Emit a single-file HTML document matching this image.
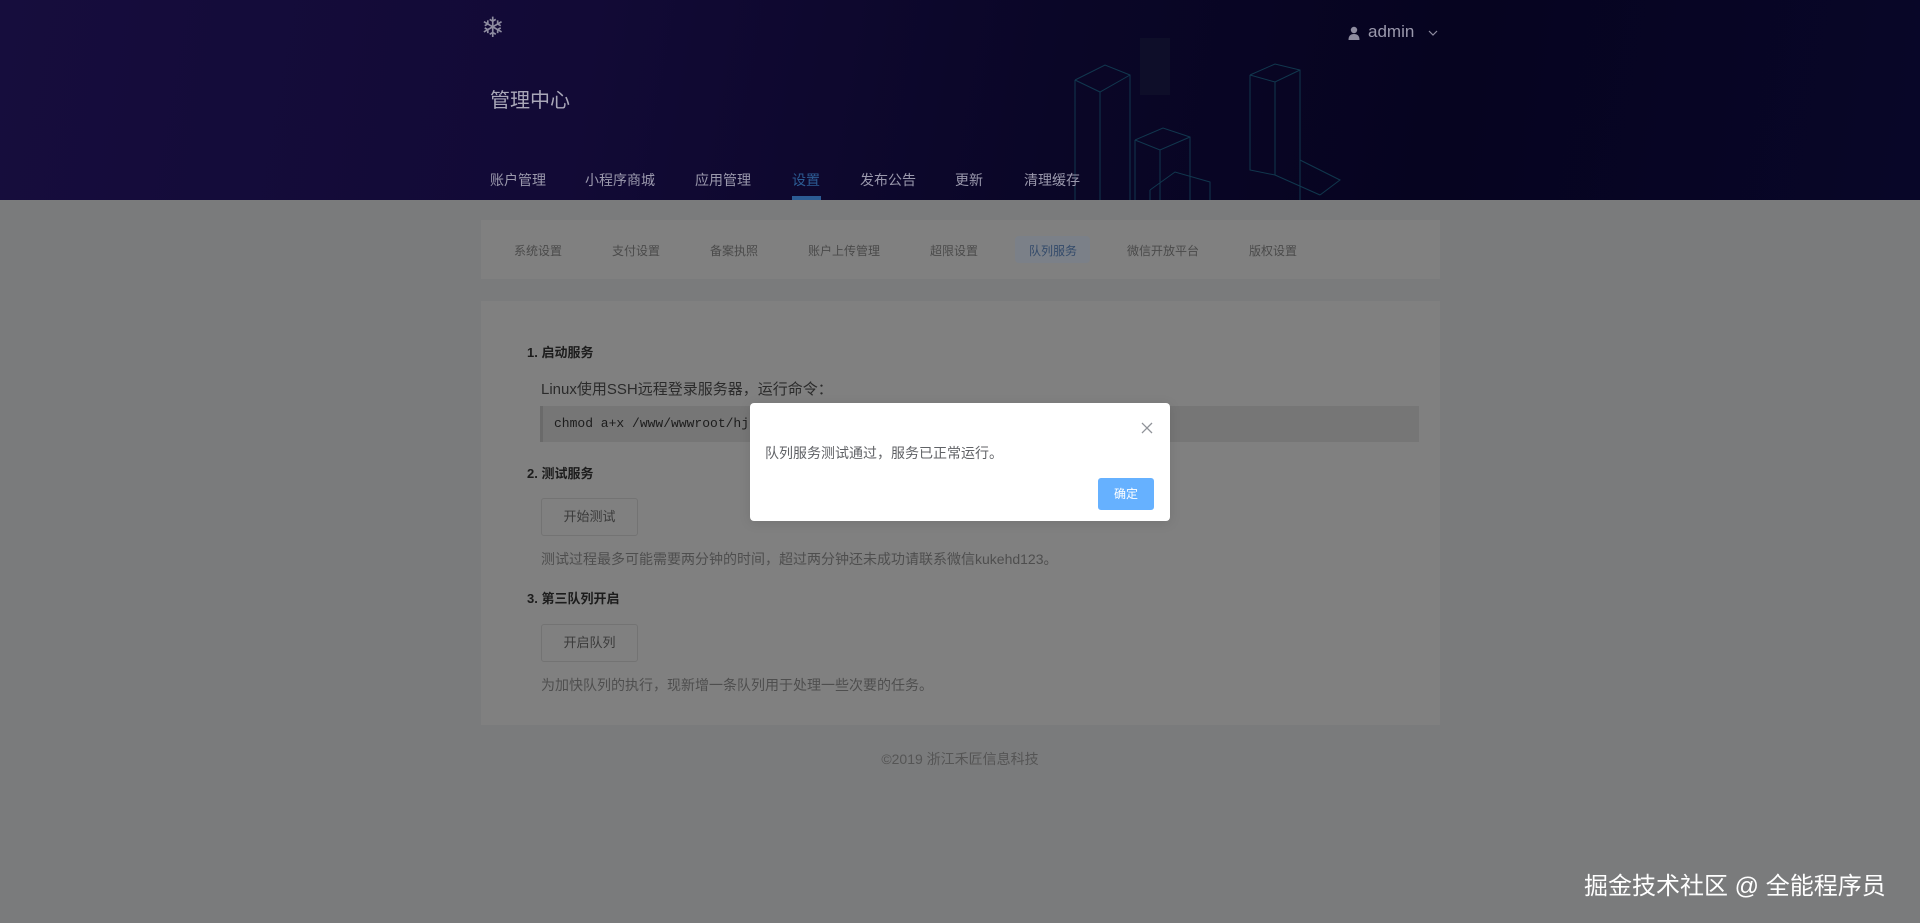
<!DOCTYPE html>
<html><head><meta charset="utf-8"><style>
*{margin:0;padding:0;box-sizing:border-box}
body{width:1920px;height:923px;overflow:hidden;background:#7a7b7c;font-family:"Liberation Sans","Noto Sans CJK SC",sans-serif;position:relative}
.hdr{position:absolute;left:0;top:0;width:1920px;height:200px;background:linear-gradient(100deg,#160d3d 0%,#120a36 30%,#0a0627 55%,#060420 75%,#080628 100%);overflow:hidden}
.abs{position:absolute;white-space:nowrap}
.nav{top:170px;font-size:14px;color:#9a98ac}
.sub{position:absolute;left:481px;top:220px;width:959px;height:59px;background:#808080}
.sub span{position:absolute;top:22px;font-size:12px;color:#4a4a4a}
.card{position:absolute;left:481px;top:301px;width:959px;height:424px;background:#808080}
.h{font-size:13px;font-weight:bold;color:#1c1c1c}
.btn{position:absolute;width:97px;height:38px;border:1px solid #737373;border-radius:3px;background:#808080;font-size:13px;color:#3a3a3a;text-align:center;line-height:36px}
.hint{font-size:14px;color:#4e4e4e}
</style></head><body>
<div class="hdr">
<svg width="1920" height="200" style="position:absolute;left:0;top:0" fill="none" stroke="#17596a" stroke-width="1" opacity=".6">
<path d="M1075 80 L1105 65 L1130 75 L1130 200 M1075 80 L1100 92 L1130 75 M1100 92 L1100 200 M1075 80 L1075 200" />
<path d="M1250 75 L1275 64 L1300 70 L1300 200 M1250 75 L1275 82 L1300 70 M1275 82 L1275 175 L1320 195 M1250 75 L1250 170 L1275 175 M1300 160 L1340 180 L1320 195"/>
<path d="M1135 140 L1163 128 L1190 137 L1190 200 M1135 140 L1160 150 L1190 137 M1160 150 L1160 200 M1135 140 L1135 200"/>
<path d="M1150 190 L1175 172 L1210 182 L1210 200 M1150 190 L1150 200"/>
<path d="M1140 38 L1170 38 L1170 95 L1140 95 Z" stroke="none" fill="#12142c"/>
</svg>
<div class="abs" style="left:481px;top:13px;font-size:28px;color:#8e8ca0;line-height:30px">❄</div>
<svg class="abs" style="left:1348px;top:26px" width="12" height="14" viewBox="0 0 12 14"><circle cx="6" cy="4" r="3.2" fill="#8e8ca0"/><path d="M0.5 14 Q0.5 8 6 8 Q11.5 8 11.5 14Z" fill="#8e8ca0"/></svg>
<div class="abs" style="left:1368px;top:22px;font-size:17px;color:#9a98ac">admin</div>
<svg class="abs" style="left:1428px;top:30px" width="10" height="7"><path d="M1 1 L5 5 L9 1" stroke="#8e8ca0" fill="none" stroke-width="1.2"/></svg>
<div class="abs" style="left:490px;top:84px;font-size:20px;color:#a9a7b8">管理中心</div>
<div class="abs nav" style="left:490px">账户管理</div>
<div class="abs nav" style="left:585px">小程序商城</div>
<div class="abs nav" style="left:695px">应用管理</div>
<div class="abs nav" style="left:792px;color:#2c5c94">设置</div>
<div class="abs" style="left:792px;top:196px;width:29px;height:4px;background:#2c5c94"></div>
<div class="abs nav" style="left:860px">发布公告</div>
<div class="abs nav" style="left:955px">更新</div>
<div class="abs nav" style="left:1024px">清理缓存</div>
</div>
<div class="sub">
<span style="left:33px">系统设置</span>
<span style="left:131px">支付设置</span>
<span style="left:229px">备案执照</span>
<span style="left:327px">账户上传管理</span>
<span style="left:449px">超限设置</span>
<div style="position:absolute;left:534px;top:16px;width:75px;height:27px;background:#7b8088;border-radius:4px"></div>
<span style="left:548px;color:#334a6a">队列服务</span>
<span style="left:646px">微信开放平台</span>
<span style="left:768px">版权设置</span>
</div>
<div class="card">
<div class="abs h" style="left:46px;top:41px">1. 启动服务</div>
<div class="abs" style="left:60px;top:77px;font-size:15px;color:#2b2b2b">Linux使用SSH远程登录服务器，运行命令：</div>
<div class="abs" style="left:59px;top:105px;width:879px;height:36px;background:#767676;border-left:3px solid #6a6a6a"></div>
<div class="abs" style="left:73px;top:115px;font-family:'Liberation Mono',monospace;font-size:13px;color:#1c1c1c">chmod a+x /www/wwwroot/hj.te</div>
<div class="abs h" style="left:46px;top:162px">2. 测试服务</div>
<div class="btn" style="left:60px;top:197px">开始测试</div>
<div class="abs hint" style="left:60px;top:248px">测试过程最多可能需要两分钟的时间，超过两分钟还未成功请联系微信kukehd123。</div>
<div class="abs h" style="left:46px;top:287px">3. 第三队列开启</div>
<div class="btn" style="left:60px;top:323px">开启队列</div>
<div class="abs hint" style="left:60px;top:374px">为加快队列的执行，现新增一条队列用于处理一些次要的任务。</div>
</div>
<div class="abs" style="left:0;width:1920px;text-align:center;top:749px;font-size:14px;color:#555">©2019 浙江禾匠信息科技</div>
<div class="abs" style="left:750px;top:403px;width:420px;height:118px;background:#fff;border-radius:4px;box-shadow:0 2px 12px rgba(0,0,0,.1)">
<svg style="position:absolute;left:391px;top:19px" width="12" height="12"><path d="M1 1 L11 11 M11 1 L1 11" stroke="#909399" stroke-width="1.3"/></svg>
<div class="abs" style="left:15px;top:40px;font-size:14px;color:#606266">队列服务测试通过，服务已正常运行。</div>
<div class="abs" style="left:348px;top:75px;width:56px;height:32px;background:#66b1ff;border-radius:3px;color:#fff;font-size:12px;text-align:center;line-height:32px">确定</div>
</div>
<div class="abs" style="left:1584px;top:866px;font-size:24px;color:#fff">掘金技术社区 @ 全能程序员</div>
</body></html>
